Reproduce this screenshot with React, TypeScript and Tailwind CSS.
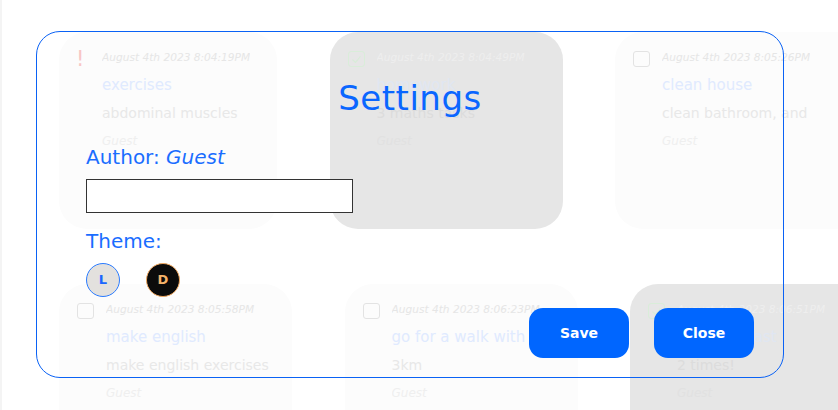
import React from "react";

type Card = {
  w: number;
  done?: boolean;
  urgent?: boolean;
  date: string;
  title: string;
  desc: string;
};

const row1: Card[] = [
  { w: 218, urgent: true, date: "August 4th 2023 8:04:19PM", title: "exercises", desc: "abdominal muscles" },
  { w: 233, done: true, date: "August 4th 2023 8:04:49PM", title: "homework", desc: "3 maths tasks" },
  { w: 260, date: "August 4th 2023 8:05:26PM", title: "clean house", desc: "clean bathroom, and" },
];

const row2: Card[] = [
  { w: 233, date: "August 4th 2023 8:05:58PM", title: "make english", desc: "make english exercises" },
  { w: 233, date: "August 4th 2023 8:06:23PM", title: "go for a walk with dog", desc: "3km" },
  { w: 240, done: true, date: "August 4th 2023 8:06:51PM", title: "eat breakfast", desc: "2 times!" },
];

function TodoCard({ c }: { c: Card }) {
  return (
    <div
      style={{ width: c.w }}
      className={`shrink-0 h-[197px] rounded-[28px] flex ${c.done ? "bg-[#e6e6e6]" : "bg-[#fcfcfc]"} ${c.urgent ? "pl-[16px]" : "pl-[18px]"}`}
    >
      <div className={`pt-[19px] ${c.urgent ? "w-[27px]" : "w-[29px]"} shrink-0`}>
        {c.urgent ? (
          <div className="text-[21px] leading-[16px] pl-[1px] text-[#f8c6c6]">!</div>
        ) : (
          <div
            className={`w-[17px] h-[16px] rounded-[3px] border-[1.5px] flex items-center justify-center ${c.done ? "border-[#d9edd9]" : "border-[#e3e3e3]"}`}
          >
            {c.done && (
              <svg width="11" height="11" viewBox="0 0 12 12" fill="none">
                <path d="M2 6.5 L5 9.2 L10 3" stroke="#d8ecd8" strokeWidth="1.3" strokeLinecap="round" strokeLinejoin="round" />
              </svg>
            )}
          </div>
        )}
      </div>
      <div className="pt-[11px] flex flex-col whitespace-nowrap overflow-hidden">
        <div className={`h-[28px] leading-[28px] text-[10.6px] italic ${c.done ? "text-[#eeeeee]" : "text-[#e6e6e6]"}`}>{c.date}</div>
        <div className={`h-[28px] leading-[28px] text-[15px] ${c.done ? "text-[#e0e6f2]" : "text-[#e0eaff]"}`}>{c.title}</div>
        <div className={`h-[28px] leading-[28px] text-[14px] ${c.done ? "text-[#dcdcdc]" : "text-[#e8e8e8]"}`}>{c.desc}</div>
        <div className={`h-[28px] leading-[28px] text-[12px] italic ${c.done ? "text-[#e1e1e1]" : "text-[#efefef]"}`}>Guest</div>
      </div>
    </div>
  );
}

export default function App() {
  return (
    <div
      className="relative w-[838px] h-[410px] overflow-hidden bg-white flex"
      style={{ fontFamily: '"DejaVu Sans", Verdana, sans-serif' }}
    >
      <div className="w-[2px] shrink-0 bg-[#f4f4f4]" />
      <div className="pl-[57px] pt-[32px] flex flex-col gap-y-[55px] shrink-0">
        <div className="flex gap-x-[52.5px]">
          {row1.map((c, i) => (
            <TodoCard key={i} c={c} />
          ))}
        </div>
        <div className="flex gap-x-[52.5px]">
          {row2.map((c, i) => (
            <TodoCard key={i} c={c} />
          ))}
        </div>
      </div>

      {/* Settings modal overlay */}
      <div className="absolute left-[36px] top-[31px] w-[748px] h-[347px] border border-[#0a62f5] rounded-[24px] flex flex-col pt-[46px] pl-[49px] pr-[29px]">
        <div className="h-[40px] leading-[40px] text-[34px] tracking-[0.5px] text-[#0a66ff] text-center -ml-[20px]">
          Settings
        </div>
        <div className="mt-[25px] h-[28px] leading-[28px] text-[20px] text-[#1a6dff]">
          Author: <span className="italic">Guest</span>
        </div>
        <div className="mt-[8px] w-[267px] h-[34px] border border-[#333333] bg-white" />
        <div className="mt-[14px] h-[28px] leading-[28px] text-[20px] text-[#1a6dff]">Theme:</div>
        <div className="mt-[8px] flex gap-[26px]">
          <div className="w-[34px] h-[34px] rounded-full bg-[#e3e1de] border border-[#2a7bff] flex items-center justify-center text-[13px] font-bold text-[#1a66ff]">
            L
          </div>
          <div className="w-[34px] h-[34px] rounded-full bg-[#0b0b0b] border border-[#f0a860] flex items-center justify-center text-[13px] font-bold text-[#f5b36a]">
            D
          </div>
        </div>
        <div className="mt-[11px] flex justify-end gap-[25px]">
          <button className="w-[100px] h-[50px] rounded-[14px] bg-[#0066ff] text-white text-[14px] font-bold">
            Save
          </button>
          <button className="w-[100px] h-[50px] rounded-[14px] bg-[#0066ff] text-white text-[14px] font-bold">
            Close
          </button>
        </div>
      </div>
    </div>
  );
}
